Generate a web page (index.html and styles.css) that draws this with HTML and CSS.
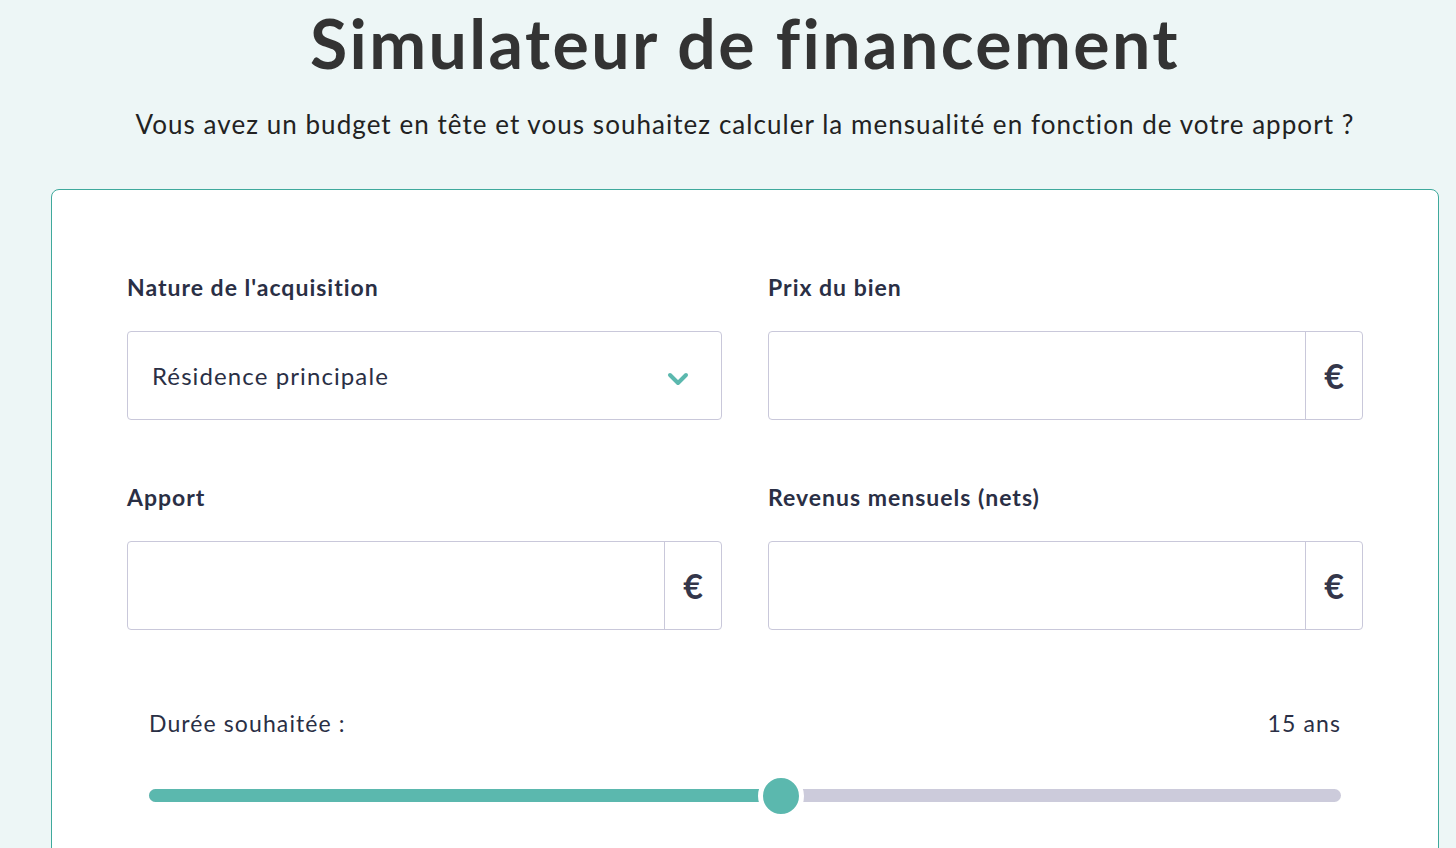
FILE: index.html
```html
<!DOCTYPE html>
<html lang="fr">
<head>
<meta charset="utf-8">
<title>Simulateur de financement</title>
<link rel="stylesheet" href="styles.css">
</head>
<body>
<header class="intro">
  <h1 class="title">Simulateur de financement</h1>
  <p class="subtitle">Vous avez un budget en tête et vous souhaitez calculer la mensualité en fonction de votre apport ?</p>
</header>
<main class="card">
  <div class="grid">
    <div class="field">
      <label class="label">Nature de l'acquisition</label>
      <div class="control select">
        <span class="select-text">Résidence principale</span>
        <svg class="chevron" width="22" height="14" viewBox="0 0 22 14"><path d="M3 3 L11 11 L19 3" fill="none" stroke="#5bb8ae" stroke-width="4" stroke-linecap="round" stroke-linejoin="round"/></svg>
      </div>
    </div>
    <div class="field">
      <label class="label">Prix du bien</label>
      <div class="control group">
        <span class="input"></span>
        <span class="addon">€</span>
      </div>
    </div>
    <div class="field">
      <label class="label">Apport</label>
      <div class="control group">
        <span class="input"></span>
        <span class="addon">€</span>
      </div>
    </div>
    <div class="field">
      <label class="label">Revenus mensuels (nets)</label>
      <div class="control group">
        <span class="input"></span>
        <span class="addon">€</span>
      </div>
    </div>
  </div>
  <section class="duration">
    <div class="duration-head">
      <span>Durée souhaitée :</span>
      <span>15 ans</span>
    </div>
    <div class="slider">
      <div class="track">
        <div class="fill" style="width: 53%"></div>
      </div>
      <div class="thumb" style="left: 53%"></div>
    </div>
  </section>
</main>
</body>
</html>
```

FILE: styles.css
```css
* { box-sizing: border-box; }
html, body {
  margin: 0;
  padding: 0;
}
body {
  background: #edf6f6;
  font-family: Lato, "Open Sans", sans-serif;
  color: #2a2f45;
  height: 848px;
  overflow: hidden;
}
.intro {
  text-align: center;
  padding: 4px 0 0 34px;
}
.title {
  margin: 0;
  font-size: 68px;
  font-weight: 700;
  line-height: 78px;
  color: #333333;
  letter-spacing: 2.4px;
}
.subtitle {
  margin: 22px 0 0;
  font-size: 26px;
  font-weight: 400;
  line-height: 40px;
  color: #222222;
  letter-spacing: 1.05px;
}
.card {
  margin: 45px 17px 0 51px;
  background: #ffffff;
  border: 1px solid #3fa99c;
  border-radius: 8px;
  padding: 82px 75px 0;
  height: 720px;
}
.grid {
  display: grid;
  grid-template-columns: 1fr 1fr;
  column-gap: 46px;
  row-gap: 62px;
}
.field {
  display: flex;
  flex-direction: column;
}
.label {
  font-size: 23px;
  font-weight: 700;
  line-height: 30px;
  margin-bottom: 29px;
  color: #2a2f45;
  letter-spacing: 1px;
}
.control {
  height: 89px;
  border: 1px solid #c9c8da;
  border-radius: 4px;
  display: flex;
  align-items: center;
}
.select {
  padding: 0 32px 0 24px;
  justify-content: space-between;
}
.select-text {
  font-size: 24px;
  color: #2a2f45;
  letter-spacing: 1.1px;
}
.chevron { margin-top: 6px; }
.input { flex: 1; }
.addon {
  width: 57px;
  align-self: stretch;
  border-left: 1px solid #c9c8da;
  display: flex;
  align-items: center;
  justify-content: center;
  font-size: 34px;
  font-weight: 700;
  color: #34364a;
}
.duration {
  margin-top: 78px;
  padding: 0 22px;
}
.duration-head {
  display: flex;
  justify-content: space-between;
  font-size: 23px;
  line-height: 30px;
  color: #2a2f45;
  letter-spacing: 1.1px;
}
.slider {
  position: relative;
  margin-top: 51px;
  height: 13px;
}
.track {
  height: 13px;
  border-radius: 7px;
  background: #cccbdb;
  overflow: hidden;
}
.fill {
  height: 100%;
  background: #5bb8ae;
}
.thumb {
  position: absolute;
  top: 50%;
  width: 46px;
  height: 46px;
  margin: -23px 0 0 -23px;
  border-radius: 50%;
  background: #5bb8ae;
  border: 5px solid #ffffff;
}
```
